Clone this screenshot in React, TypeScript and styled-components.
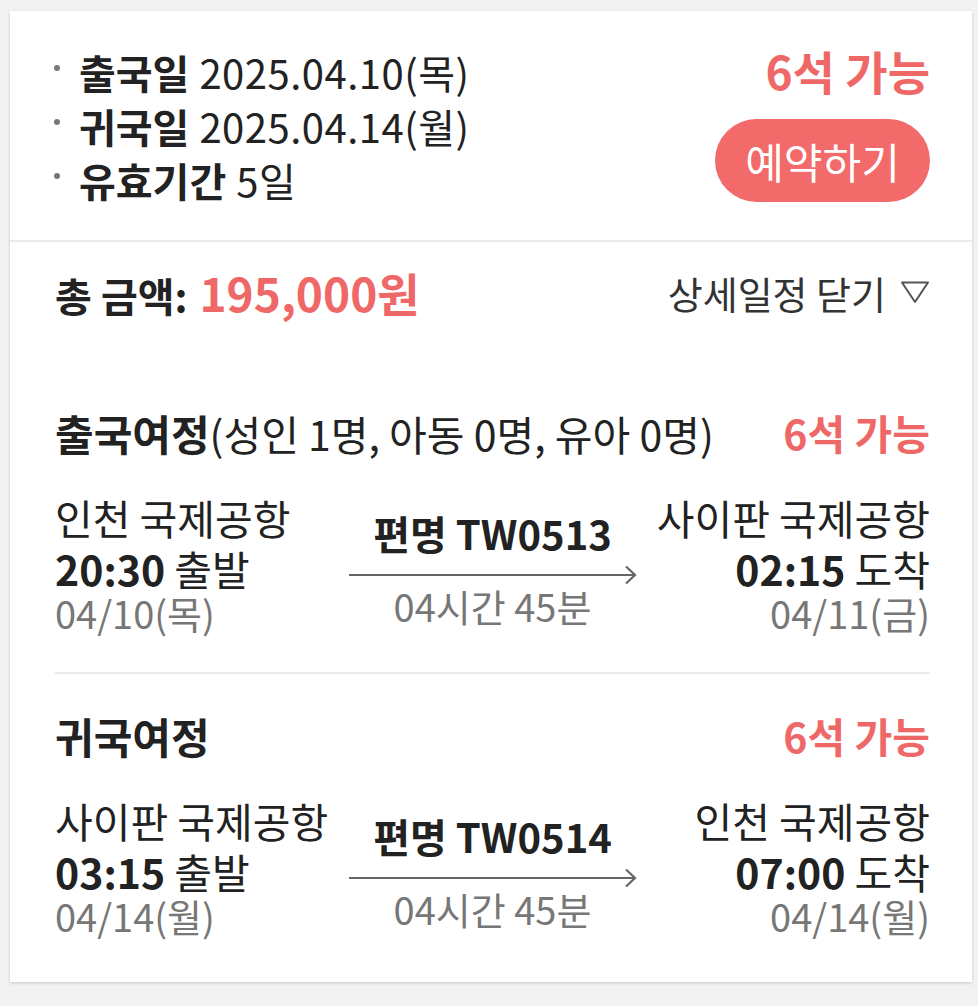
import React from "react";
import styled, { createGlobalStyle } from "styled-components";

const Global = createGlobalStyle`
  html, body { margin: 0; padding: 0; background: #f2f2f2; }
  body { font-family: "Noto Sans CJK KR", "Noto Sans", sans-serif; color: #222; font-weight: 400; }
`;

const RED = "#ef6868";

const Page = styled.div`
  padding: 11px 6px 27px 10px;
`;

const Card = styled.div`
  background: #fff;
  box-shadow: 0 1px 3px rgba(0, 0, 0, 0.18);
`;

const Top = styled.div`
  display: flex;
  justify-content: space-between;
  align-items: flex-start;
  padding: 34px 42px 33px 45px;
  border-bottom: 2px solid #ebebeb;
`;

const InfoList = styled.ul`
  list-style: none;
  margin: 0;
  padding: 0;
  display: flex;
  flex-direction: column;
`;

const InfoItem = styled.li`
  display: flex;
  align-items: center;
  font-size: 40px;
  line-height: 54px;
  letter-spacing: 0.5px;
  &::before {
    content: "";
    width: 6px;
    height: 6px;
    border-radius: 50%;
    background: #777;
    margin: 0 19px 0 -1px;
    transform: translateY(-4px);
  }
`;

const Label = styled.b`
  font-weight: 700;
  margin-right: 10px;
  letter-spacing: 0;
`;

const TopRight = styled.div`
  display: flex;
  flex-direction: column;
  align-items: flex-end;
  gap: 24px;
`;

const Seats = styled.div<{ $size?: number; $weight?: number }>`
  color: ${RED};
  font-size: ${(p) => p.$size ?? 46}px;
  font-weight: ${(p) => p.$weight ?? 700};
  line-height: 50px;
`;

const BookButton = styled.button`
  background: #f26a6a;
  color: #fff;
  border: none;
  border-radius: 42px;
  height: 83px;
  width: 215px;
  font-family: inherit;
  font-size: 42px;
  font-weight: 400;
  padding: 0;
`;

const TotalRow = styled.div`
  display: flex;
  justify-content: space-between;
  align-items: center;
  padding: 0 42px 0 45px;
  height: 100px;
`;

const TotalLabel = styled.div`
  font-size: 40px;
  font-weight: 700;
  display: flex;
  align-items: baseline;
`;

const TotalPrice = styled.span`
  color: ${RED};
  font-size: 46px;
  font-weight: 700;
  margin-left: 12px;
`;

const DetailToggle = styled.div`
  font-size: 38px;
  color: #333;
  display: flex;
  align-items: center;
  gap: 14px;
`;

const Journeys = styled.div`
  padding: 60px 42px 45px 45px;
`;

const Journey = styled.section<{ $divider?: boolean }>`
  padding: ${(p) => (p.$divider ? "31px 0 0" : "0 0 38px")};
  border-top: ${(p) => (p.$divider ? "2px solid #ebebeb" : "none")};
`;

const JourneyHead = styled.div`
  display: flex;
  justify-content: space-between;
  align-items: center;
  height: 60px;
`;

const JourneyTitle = styled.h3`
  margin: 0;
  font-size: 42px;
  font-weight: 700;
`;

const Pax = styled.span`
  font-weight: 400;
  font-size: 41px;
`;

const Leg = styled.div`
  display: grid;
  grid-template-columns: 1fr 290px 1fr;
  align-items: start;
  margin-top: 28px;
`;

const Point = styled.div<{ $right?: boolean }>`
  display: flex;
  flex-direction: column;
  align-items: ${(p) => (p.$right ? "flex-end" : "flex-start")};
  text-align: ${(p) => (p.$right ? "right" : "left")};
`;

const Airport = styled.div`
  font-size: 41px;
  line-height: 54px;
  white-space: nowrap;
`;

const Time = styled.div`
  font-size: 41px;
  line-height: 48px;
  white-space: nowrap;
  b { font-weight: 700; }
`;

const DateText = styled.div`
  font-size: 38px;
  line-height: 42px;
  color: #777;
`;

const Middle = styled.div`
  display: flex;
  flex-direction: column;
  align-items: center;
  padding-top: 19px;
`;

const Flight = styled.div`
  font-size: 40px;
  font-weight: 700;
  line-height: 48px;
`;

const Duration = styled.div`
  font-size: 38px;
  color: #777;
  line-height: 42px;
`;

const ArrowSvg = styled.svg`
  display: block;
  margin: 8px 0 0;
`;

const Arrow = () => (
  <ArrowSvg width="290" height="20" viewBox="0 0 290 20">
    <line x1="1" y1="10" x2="287" y2="10" stroke="#666" strokeWidth="2.2" />
    <polyline points="278,1.5 287,10 278,18.5" fill="none" stroke="#666" strokeWidth="2.2" />
  </ArrowSvg>
);

const Caret = () => (
  <svg width="30" height="24" viewBox="0 0 30 24">
    <polygon points="2,2.5 28,2.5 15,22" fill="none" stroke="#555" strokeWidth="2" strokeLinejoin="round" />
  </svg>
);

type LegData = {
  from: string;
  to: string;
  dep: string;
  arr: string;
  depDate: string;
  arrDate: string;
  flight: string;
  duration: string;
};

const LegRow = ({ d }: { d: LegData }) => (
  <Leg>
    <Point>
      <Airport>{d.from}</Airport>
      <Time>
        <b>{d.dep}</b> 출발
      </Time>
      <DateText>{d.depDate}</DateText>
    </Point>
    <Middle>
      <Flight>편명 {d.flight}</Flight>
      <Arrow />
      <Duration>{d.duration}</Duration>
    </Middle>
    <Point $right>
      <Airport>{d.to}</Airport>
      <Time>
        <b>{d.arr}</b> 도착
      </Time>
      <DateText>{d.arrDate}</DateText>
    </Point>
  </Leg>
);

export default function App() {
  return (
    <>
      <Global />
      <Page>
        <Card>
          <Top>
            <InfoList>
              <InfoItem>
                <Label>출국일</Label>2025.04.10(목)
              </InfoItem>
              <InfoItem>
                <Label>귀국일</Label>2025.04.14(월)
              </InfoItem>
              <InfoItem>
                <Label>유효기간</Label>5일
              </InfoItem>
            </InfoList>
            <TopRight>
              <Seats>6석 가능</Seats>
              <BookButton>예약하기</BookButton>
            </TopRight>
          </Top>
          <TotalRow>
            <TotalLabel>
              총 금액:<TotalPrice>195,000원</TotalPrice>
            </TotalLabel>
            <DetailToggle>
              상세일정 닫기 <Caret />
            </DetailToggle>
          </TotalRow>
          <Journeys>
            <Journey>
              <JourneyHead>
                <JourneyTitle>
                  출국여정<Pax>(성인 1명, 아동 0명, 유아 0명)</Pax>
                </JourneyTitle>
                <Seats $size={41} $weight={600}>6석 가능</Seats>
              </JourneyHead>
              <LegRow
                d={{
                  from: "인천 국제공항",
                  to: "사이판 국제공항",
                  dep: "20:30",
                  arr: "02:15",
                  depDate: "04/10(목)",
                  arrDate: "04/11(금)",
                  flight: "TW0513",
                  duration: "04시간 45분",
                }}
              />
            </Journey>
            <Journey $divider>
              <JourneyHead>
                <JourneyTitle>귀국여정</JourneyTitle>
                <Seats $size={41} $weight={600}>6석 가능</Seats>
              </JourneyHead>
              <LegRow
                d={{
                  from: "사이판 국제공항",
                  to: "인천 국제공항",
                  dep: "03:15",
                  arr: "07:00",
                  depDate: "04/14(월)",
                  arrDate: "04/14(월)",
                  flight: "TW0514",
                  duration: "04시간 45분",
                }}
              />
            </Journey>
          </Journeys>
        </Card>
      </Page>
    </>
  );
}
